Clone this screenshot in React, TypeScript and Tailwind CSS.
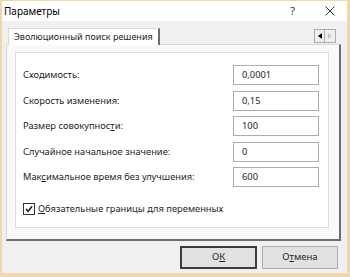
import React from "react";

const font = { fontFamily: '"Noto Sans", "Segoe UI", sans-serif' };

const fields = [
  { label: <>Сходимость:</>, value: "0,0001" },
  { label: <>Скорость изменения:</>, value: "0,15" },
  { label: <>Размер совокупнос<u>т</u>и:</>, value: "100" },
  { label: <>Случайное начальное значение:</>, value: "0" },
  { label: <>Мак<u>с</u>имальное время без улучшения:</>, value: "600" },
];

export default function App() {
  return (
    <div
      className="w-[350px] h-[277px] bg-[#efd7b0] pt-px pl-[2px] pr-[3px] pb-[4px] flex flex-col text-[9.3px] text-[#1e1e1e]"
      style={font}
    >
      {/* title bar */}
      <div className="h-[20px] bg-white flex items-center pl-[2px] shrink-0">
        <span className="text-[10px] text-black">Параметры</span>
        <span className="ml-auto mr-[30px] text-[11px] text-[#333]">?</span>
        <svg width="10" height="10" viewBox="0 0 10 10" className="mr-[12px]">
          <path d="M0.5 0.5 L9.5 9.5 M9.5 0.5 L0.5 9.5" stroke="#333" strokeWidth="1" />
        </svg>
      </div>

      <div className="flex-1 bg-[#f0f0f0] flex flex-col">
        {/* tab strip */}
        <div className="h-[23px] flex items-end pl-[6px] pr-[11px] shrink-0">
          <div className="h-[17px] w-[152px] bg-white border border-b-0 border-[#d9d9d9] border-r-[#6d6d6d] border-r-2 flex items-center pl-[5px] -mb-px relative z-10 text-[9px]">
            Эволюционный поиск решения
          </div>
          <div className="ml-auto mb-[1px] flex h-[14px]">
            <div className="w-[11px] h-[14px] bg-[#f0f0f0] border border-[#adadad] flex items-center justify-center">
              <svg width="4" height="6" viewBox="0 0 4 6"><path d="M4 0 L0 3 L4 6 Z" fill="#000" /></svg>
            </div>
            <div className="w-[11px] h-[14px] bg-[#f0f0f0] border border-l-0 border-[#adadad] flex items-center justify-center">
              <svg width="4" height="6" viewBox="0 0 4 6"><path d="M0 0 L4 3 L0 6 Z" fill="#c8c8c8" /></svg>
            </div>
          </div>
        </div>

        {/* tab page */}
        <div className="ml-[4px] w-[335px] h-[197px] border border-[#d9d9d9] border-r-[#6d6d6d] border-b-[#6d6d6d] border-r-2 border-b-2 bg-[#f9f9f9] pt-[7px] pl-[8px] shrink-0">
          <div className="w-[314px] h-[176px] bg-white border border-[#dcdcdc] pt-[12px] pl-[7px] pr-[9px] flex flex-col">
            <div className="flex flex-col gap-[5.5px]">
              {fields.map((f, i) => (
                <div key={i} className="flex items-center h-[20px]">
                  <span>{f.label}</span>
                  <div className="ml-auto w-[86px] h-[20px] border border-[#abadb3] bg-white flex items-center pl-[8px]">
                    {f.value}
                  </div>
                </div>
              ))}
            </div>
            <div className="flex items-center mt-[15px] gap-[3px]">
              <div className="w-[12px] h-[12px] border border-[#333] bg-white flex items-center justify-center">
                <svg width="8" height="8" viewBox="0 0 9 9">
                  <path d="M1 4.5 L3.5 7 L8 1.5" stroke="#222" strokeWidth="1.8" fill="none" />
                </svg>
              </div>
              <span>
                <u>О</u>бязательные границы для переменных
              </span>
            </div>
          </div>
        </div>

        {/* buttons */}
        <div className="flex gap-[5px] pl-[178px] pt-[5px]">
          <button className="w-[77px] h-[23px] bg-[#e1e1e1] border-2 border-[#3c3c3c] flex items-center justify-center text-[9.5px]">
            О<u>К</u>
          </button>
          <button className="w-[76px] h-[23px] bg-[#e1e1e1] border border-[#adadad] flex items-center justify-center text-[9.5px]">
            О<u>т</u>мена
          </button>
        </div>
      </div>
    </div>
  );
}
